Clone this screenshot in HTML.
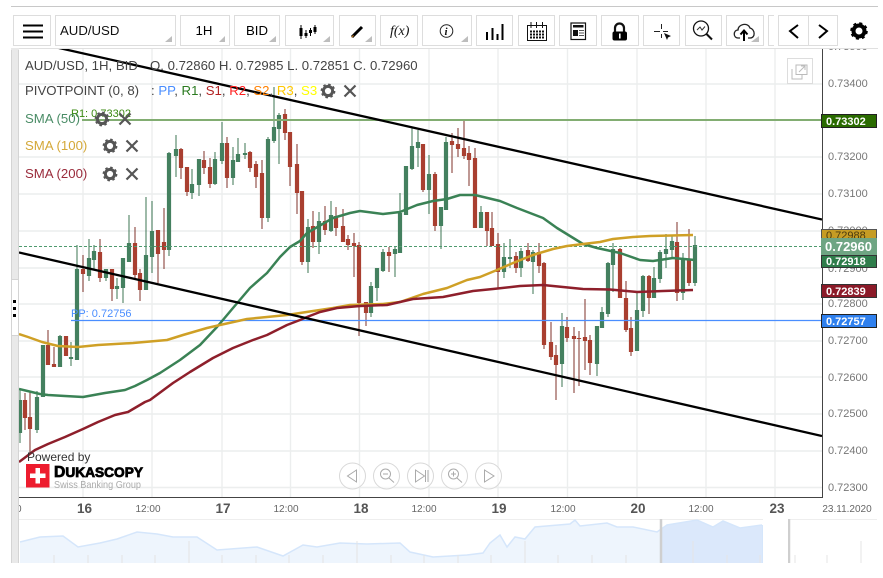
<!DOCTYPE html>
<html><head><meta charset="utf-8"><title>AUD/USD</title>
<style>
html,body{margin:0;padding:0;background:#fff;width:883px;height:578px;overflow:hidden}
svg{display:block;font-family:"Liberation Sans",sans-serif}
</style></head><body>
<svg width="883" height="578" viewBox="0 0 883 578" xmlns="http://www.w3.org/2000/svg">
<defs>
<g id="gear"><circle r="4.6" fill="none" stroke="#555" stroke-width="3"/><circle r="6.2" fill="none" stroke="#555" stroke-width="2.4" stroke-dasharray="2.43 2.43"/></g>
<g id="x"><path d="M-5.5-5.5L5.5 5.5M5.5-5.5L-5.5 5.5" stroke="#555" stroke-width="2.2" fill="none"/></g>
<clipPath id="plot"><rect x="19" y="48" width="803" height="449"/></clipPath>
<clipPath id="ax"><rect x="823" y="48" width="60" height="450"/></clipPath>
<clipPath id="dates"><rect x="19" y="498" width="864" height="20"/></clipPath>
</defs>

<!-- price grid -->
<g stroke="#eceeee" stroke-width="1.4" fill="none">
<path d="M19 84H822M19 157H822M19 194H822M19 231H822M19 268H822M19 304H822M19 341H822M19 377H822M19 414H822M19 451H822M19 487.500H822"/>
<path d="M83 48V497M152 48V497M222 48V497M290.500 48V497M359.500 48V497M429 48V497M498 48V497M567.500 48V497M637 48V497M706 48V497M775 48V497"/>
</g>

<!-- left strip -->
<rect x="11" y="48" width="8" height="515" fill="#e9e9e9"/>
<rect x="12" y="280" width="6" height="55" fill="#fff"/>
<path d="M11.500 48V563M18.500 48V563" stroke="#d4d4d4" fill="none"/>
<path d="M12 279.500H18M12 335.500H18" stroke="#d4d4d4"/>
<rect x="13" y="300" width="3" height="3" fill="#000"/><rect x="13" y="307" width="3" height="3" fill="#000"/><rect x="13" y="314" width="3" height="3" fill="#000"/>

<g clip-path="url(#plot)">
<!-- green wicks -->
<path fill="none" stroke="#356f4c" stroke-opacity=".8" stroke-width="1.200" d="M20 390V443M37 391V433M60 335V367M71 342V366M77 245V360M89 239V281M94 245V270M106 269V281M117 278V299M123 258V303M129 215V262M146 197V290M152 201V273M169 152V256M176 135V177M192 169V199M199 159V196M215 152V185M222 122V164M233 147V185M238 138V162M245 143V159M268 137V222M274 87V143M279 113V164M308 219V273M319 212V254M331 201V232M371 282V317M377 268V301M383 249V272M395 247V277M400 193V253M412 128V170M418 130V167M429 155V214M441 207V249M446 137V210M481 206V228M504 243V278M510 239V268M521 248V277M533 250V294M562 313V387M597 326V376M602 307V328M608 262V317M613 243V292M637 291V351M643 275V317M654 267V298M660 250V283M666 234V268M672 235V258M683 253V300M695 236V286"/>
<!-- red wicks -->
<path fill="none" stroke="#7a2a22" stroke-opacity=".8" stroke-width="1.200" d="M25 393V430M30 392V453M48 330V365M54 347V367M83 255V292M100 239V282M112 269V301M135 227V280M140 269V301M158 230V283M164 208V269M181 148V179M187 167V196M204 151V174M210 158V188M227 137V188M250 151V172M256 161V188M262 160V229M285 109V140M290 132V186M297 144V214M302 191V265M313 211V248M325 206V235M336 207V236M343 209V242M348 235V250M354 233V277M359 242V336M366 302V326M389 247V272M423 144V192M435 172V231M452 133V173M458 128V157M464 120V159M469 146V186M475 148V228M487 212V246M492 212V246M498 233V289M516 252V273M528 243V262M539 243V273M544 262V349M551 322V360M556 345V400M567 317V342M574 327V393M579 331V386M585 299V370M590 335V375M620 248V298M626 281V332M631 317V356M649 275V314M677 222V301M689 229V286"/>
<!-- green bodies -->
<path fill="none" stroke="#44805f" stroke-width="4.200" d="M20 400V433M37 397V430M43 345V397M60 336V367M71 357V359M77 269V360M89 258V276M94 251V260M106 269V278M117 286V289M123 258V288M129 243V262M146 255V290M152 231V257M169 153V250M176 149V156M192 184V193M199 159V185M215 159V184M222 143V161M233 160V178M238 154V162M245 153V155M268 139V218M274 127V141M279 115V129M308 227V262M319 221V242M331 215V231M371 286V313M377 268V288M383 252V271M395 249V254M400 213V253M406 166V215M412 146V169M418 142V148M429 174V190M441 207V226M446 142V210M481 212V228M504 257V272M510 257V259M521 251V268M533 252V262M562 326V364M597 326V364M602 312V328M608 263V314M613 249V265M637 310V351M643 276V311M654 278V298M660 252V279M666 249V254M672 241V250M683 260V293M695 245V283"/>
<!-- red bodies -->
<path fill="none" stroke="#a93f30" stroke-width="4.200" d="M25 400V418M30 417V429M48 345V365M54 364V367M66 336V356M83 269V274M100 252V278M112 269V289M135 243V275M140 273V290M158 230V254M164 242V250M181 149V168M187 167V192M204 160V168M210 167V184M227 143V178M250 152V168M256 164V177M262 173V218M285 114V133M290 132V167M297 164V193M302 191V262M313 226V242M325 221V230M336 216V228M343 226V242M348 239V245M354 243V246M359 245V303M366 302V313M389 252V256M423 144V190M435 174V226M452 141V145M458 144V149M464 148V156M469 153V160M475 158V228M487 212V231M492 228V246M498 244V272M516 256V268M528 250V261M539 252V266M544 263V345M551 342V357M556 355V365M567 327V338M574 336V339M579 338V339M585 337V341M590 340V363M620 249V298M626 298V330M631 328V352M649 276V298M677 242V293M689 259V283"/>

<!-- horizontal levels -->
<path d="M82 120H822" stroke="#82ad72" stroke-width="2" fill="none"/>
<path d="M71 320.500H822" stroke="#4a8eff" stroke-width="1.300" fill="none"/>
<path d="M19 246.500H822" stroke="#4f9a6f" stroke-width="1" stroke-dasharray="3 2" fill="none"/>

<!-- SMA lines -->
<polyline fill="none" stroke="#3a8255" stroke-width="2.500" stroke-linejoin="round" points="19,389 40,394 48,395 65,396 83,397 105,393 125,390 135,386 147,380 160,373 180,360 200,345 217,327 233,308 250,288 267,273 280,257 290,247 300,241 307,233 333,218 350,213 360,211 383,214 400,212 417,205 433,201 447,199 460,195 475,195 500,201 517,208 543,218 557,228 583,244 597,248 620,253 640,260 653,261 673,258 695,260"/>
<polyline fill="none" stroke="#cfa026" stroke-width="2.500" stroke-linejoin="round" points="19,334 28,337 42,342 58,346 78,347 98,345 133,343 167,340 183,335 207,328 220,325 247,319 267,317 287,315 300,313 333,308 350,305 383,304 400,302 423,294 447,288 467,280 480,277 497,270 513,263 533,255 553,249 567,246 583,244 600,242 613,239 633,237 650,236 693,235"/>
<polyline fill="none" stroke="#8e1f2b" stroke-width="2.500" stroke-linejoin="round" points="19,462 35,450 48,444 65,437 83,429 98,422 115,415 128,412 145,402 150,400 173,383 190,372 213,358 233,348 253,340 267,335 287,325 300,320 307,317 320,312 337,308 360,306 387,305 413,299 443,297 473,291 493,289 520,286 543,285 563,287 583,289 610,289.500 637,292 663,291 693,290"/>

<!-- trend lines -->
<path d="M19 39L822 219.500" stroke="#000" stroke-width="2.300" fill="none"/>
<path d="M19 252.500L822 436" stroke="#000" stroke-width="2.300" fill="none"/>

<text x="71" y="317" font-size="11" fill="#4a8eff">PP: 0.72756</text>
<text x="71" y="117" font-size="11" fill="#3a8a10">R1: 0.73302</text>
</g>

<!-- axes -->
<path d="M822.500 48V497.500H19" stroke="#444" stroke-width="1" fill="none"/>

<!-- price labels -->
<g font-size="11" fill="#777" clip-path="url(#ax)">
<text x="828" y="50">0.73500</text>
<text x="828" y="87">0.73400</text>
<text x="828" y="160">0.73200</text>
<text x="828" y="197">0.73100</text>
<text x="828" y="234">0.73000</text>
<text x="828" y="272">0.72900</text>
<text x="828" y="307">0.72800</text>
<text x="828" y="344">0.72700</text>
<text x="828" y="381">0.72600</text>
<text x="828" y="417">0.72500</text>
<text x="828" y="454">0.72400</text>
<text x="828" y="491">0.72300</text>
</g>

<!-- price tags -->
<g font-size="11" font-weight="bold" fill="#fff">
<rect x="821.500" y="114.500" width="55" height="13" fill="#2a6b00" stroke="#222"/><text x="826" y="125">0.73302</text>
<rect x="821.500" y="229.500" width="55" height="11" fill="#c69c24" stroke="#555"/><text x="826" y="239" fill="#4a3a10" font-weight="normal">0.72988</text>
<rect x="821.500" y="255.500" width="55" height="12" fill="#2f7d4b" stroke="#333"/><text x="826" y="265">0.72918</text>
<rect x="821" y="238" width="56" height="17" fill="#6fa583"/><text x="825" y="251" font-size="13">0.72960</text>
<rect x="821.500" y="284.500" width="55" height="13" fill="#8b1a28" stroke="#333"/><text x="826" y="295">0.72839</text>
<rect x="821.500" y="314.500" width="55" height="13" fill="#2f80ee" stroke="#222"/><text x="826" y="325">0.72757</text>
</g>

<!-- top cover & toolbar -->
<rect x="0" y="0" width="883" height="48" fill="#fff"/>
<path d="M11 6.500H878" stroke="#c8c8c8" stroke-width="1" fill="none"/>
<path d="M11 48.500H878" stroke="#e0e0e0" stroke-width="1" fill="none"/>
<rect x="11" y="48" width="8" height="2" fill="#e9e9e9"/>
<g fill="#fff" stroke="#ddd">
<rect x="13.500" y="15.500" width="37" height="30"/>
<rect x="55.500" y="15.500" width="120" height="30"/>
<rect x="180.500" y="15.500" width="49" height="30"/>
<rect x="234.500" y="15.500" width="45" height="30"/>
<rect x="285.500" y="15.500" width="48" height="30"/>
<rect x="339.500" y="15.500" width="36" height="30"/>
<rect x="380.500" y="15.500" width="37" height="30"/>
<rect x="422.500" y="15.500" width="49" height="30"/>
<rect x="476.500" y="15.500" width="36" height="30"/>
<rect x="518.500" y="15.500" width="36" height="30"/>
<rect x="559.500" y="15.500" width="37" height="30"/>
<rect x="601.500" y="15.500" width="37" height="30"/>
<rect x="643.500" y="15.500" width="36" height="30"/>
<rect x="685.500" y="15.500" width="36" height="30"/>
<rect x="726.500" y="15.500" width="37" height="30"/>
<path d="M774 15.500H768.500V45.500H774"/>
<rect x="778.500" y="15.500" width="59" height="30"/>
<path d="M808.500 15.500V45.500"/>
</g>
<g fill="#bdbdbd">
<polygon points="165,42 172,42 172,36"/><polygon points="219,42 225,42 225,36"/><polygon points="269,42 276,42 276,36"/><polygon points="323,42 330,42 330,36"/><polygon points="365,42 372,42 372,36"/><polygon points="461,42 468,42 468,36"/><polygon points="751,42 759,42 759,36"/>
</g>
<path d="M23 25.500H43M23 31.500H43M23 37.500H43" stroke="#000" stroke-width="2" fill="none"/>
<text x="60" y="35" font-size="13.200" fill="#111">AUD/USD</text>
<text x="195.500" y="35" font-size="13.200" fill="#000">1H</text>
<text x="246" y="35" font-size="13.200" fill="#000">BID</text>
<!-- chart type -->
<path d="M301 25V39M306 30V38M310.500 28V36M315 25V34" stroke="#000" stroke-width="1" fill="none"/>
<path d="M301 28V36M306 33V36M310.500 30V33M315 27V32" stroke="#000" stroke-width="3" fill="none"/>
<!-- pencil -->
<path d="M352 37L362 27" stroke="#000" stroke-width="3" fill="none"/><path d="M351 38L354 36L353 35Z" fill="#e08a20"/>
<text x="390" y="35" font-size="14" font-style="italic" font-family="Liberation Serif,serif" fill="#111">f(x)</text>
<!-- info -->
<circle cx="446.500" cy="31" r="6.300" fill="none" stroke="#222" stroke-width="1"/>
<text x="444.500" y="35" font-size="11" font-style="italic" font-weight="bold" font-family="Liberation Serif,serif" fill="#111">i</text>
<!-- bars -->
<path d="M487 40V32M492.500 40V28M497.500 40V34M502.500 40V24" stroke="#000" stroke-width="2" fill="none"/>
<!-- calendar -->
<rect x="527.500" y="25.500" width="19" height="15" fill="#fff" stroke="#111"/>
<path d="M531 22V28M536.500 22V28M542.500 22V28" stroke="#111" fill="none"/>
<path d="M530 31.500H544M530 34.500H544M530 37.500H544" stroke="#111" stroke-width="2" stroke-dasharray="2 1" fill="none"/>
<!-- news -->
<rect x="571" y="23" width="14.500" height="16.500" fill="#fff" stroke="#111" stroke-width="1.200"/>
<rect x="573" y="25" width="10.500" height="2.500" fill="#111"/><rect x="573" y="30" width="5" height="6" fill="#111"/>
<path d="M579 30.500H584M579 33H584M579 35.500H584" stroke="#555" fill="none"/>
<!-- lock -->
<path d="M615 33V28A4.500 4.500 0 0 1 624 28V33" fill="none" stroke="#111" stroke-width="2.200"/>
<rect x="612.500" y="31.500" width="14.500" height="9" rx="2" fill="#000"/><rect x="619" y="33.500" width="1.600" height="5" fill="#fff"/>
<!-- crosshair -->
<path d="M654 31.500H660M663 31.500H668M661.500 24V29M661.500 34V38" stroke="#222" fill="none"/>
<path d="M664 33L671 36L668 37.500L667 40Z" fill="#111"/>
<!-- zoom chart -->
<circle cx="701" cy="28.500" r="7.500" fill="none" stroke="#111" stroke-width="1.300"/>
<path d="M706.500 34L712 39.500" stroke="#111" stroke-width="2" fill="none"/>
<path d="M697 30L700 27L702 30L705 26.500" stroke="#333" fill="none"/>
<!-- cloud -->
<path d="M740 38H738C733 38 733 30 738 30C738 24 748 22 750 28C755 29 756 38 750 38H748" fill="none" stroke="#222" stroke-width="1.300"/>
<path d="M744 41V31M740.500 34.500L744 30.500L747.500 34.500" fill="none" stroke="#000" stroke-width="2"/>
<!-- arrows -->
<path d="M798 25L790 31L798 38" stroke="#000" stroke-width="2" fill="none"/>
<path d="M819 25L827 31L819 38" stroke="#000" stroke-width="2" fill="none"/>
<!-- big gear -->
<g transform="translate(859,31)"><circle r="5.500" fill="none" stroke="#000" stroke-width="4"/><circle r="7.300" fill="none" stroke="#000" stroke-width="3" stroke-dasharray="2.870 2.860"/></g>

<!-- popout -->
<rect x="787.500" y="58.500" width="25" height="25" fill="#fff" stroke="#ddd"/>
<path d="M792 69V79H802V74M796 65V74.500H807V65Z" fill="#fff" stroke="#bbb"/>
<path d="M799 72L805 66M801 66H805V70" stroke="#bbb" fill="none"/>

<!-- legends -->
<text x="25" y="70" font-size="13.200" fill="#444">AUD/USD, 1H, BID</text>
<text x="150" y="70" font-size="13.200" fill="#444">O. 0.72860 H. 0.72985 L. 0.72851 C. 0.72960</text>
<text x="25" y="95" font-size="13.200" fill="#444">PIVOTPOINT (0, 8)</text>
<text x="151" y="95" font-size="13.200" fill="#444" xml:space="preserve">: <tspan fill="#4a8eff">PP</tspan>, <tspan fill="#2a7a1f">R1</tspan>, <tspan fill="#b22222">S1</tspan>, <tspan fill="#ff2020">R2</tspan>, <tspan fill="#ff8000">S2</tspan>, <tspan fill="#ffc800">R3</tspan>, <tspan fill="#ffff00">S3</tspan></text>
<use href="#gear" x="328" y="91"/><use href="#x" x="350" y="91"/>
<text x="25" y="123" font-size="13.200" fill="#4a8c66">SMA (50)</text>
<use href="#gear" x="102" y="119"/><use href="#x" x="125" y="119"/>
<text x="25" y="150" font-size="13.200" fill="#d4a838">SMA (100)</text>
<use href="#gear" x="110" y="146"/><use href="#x" x="132" y="146"/>
<text x="25" y="178" font-size="13.200" fill="#9a2b3b">SMA (200)</text>
<use href="#gear" x="110" y="174"/><use href="#x" x="132" y="174"/>

<!-- logo -->
<text x="27" y="461" font-size="12" fill="#333">Powered by</text>
<rect x="26" y="464" width="23.500" height="23.500" fill="#ed1c2e"/>
<path d="M35.500 468H40V473.500H45.500V478H40V483.500H35.500V478H30V473.500H35.500Z" fill="#fff"/>
<text x="54" y="477" font-size="16" font-weight="bold" fill="#000" textLength="89" lengthAdjust="spacingAndGlyphs" stroke="#000" stroke-width=".8">D<tspan font-size="14">UKASCOPY</tspan></text>
<text x="54" y="488" font-size="10.500" fill="#aaa" textLength="87" lengthAdjust="spacingAndGlyphs">Swiss Banking Group</text>

<!-- nav buttons -->
<g fill="#fff" fill-opacity=".6" stroke="#d8d8d8">
<circle cx="352.500" cy="476" r="13"/><circle cx="386.500" cy="476" r="13"/><circle cx="420.500" cy="476" r="13"/><circle cx="454.500" cy="476" r="13"/><circle cx="488.500" cy="476" r="13"/>
</g>
<g fill="none" stroke="#aaa">
<path d="M356.500 470V482L347.500 476Z"/>
<circle cx="385.500" cy="474" r="5"/><path d="M389 478L394 482.500M383 474H388"/>
<path d="M415.500 470V482L424.500 476ZM425.500 470V482M428 470V482"/>
<circle cx="453.500" cy="474" r="5"/><path d="M457 478L462 482.500M451 474H456M453.500 471.500V476.500"/>
<path d="M484.500 470V482L494 476Z"/>
</g>

<!-- date axis -->
<g clip-path="url(#dates)">
<text x="9" y="512" font-size="10" fill="#666" text-anchor="middle">12:00</text>
<g font-size="13.500" font-weight="bold" fill="#555" text-anchor="middle">
<text x="84.500" y="513">16</text><text x="223" y="513">17</text><text x="361" y="513">18</text><text x="499" y="513">19</text><text x="638" y="513">20</text><text x="777" y="513">23</text>
</g>
<g font-size="10" fill="#666" text-anchor="middle">
<text x="148" y="512">12:00</text><text x="286" y="512">12:00</text><text x="424" y="512">12:00</text><text x="563" y="512">12:00</text><text x="701" y="512">12:00</text><text x="847" y="512">23.11.2020</text>
</g>
</g>

<!-- navigator -->
<path d="M19 519.500H877" stroke="#eee" fill="none"/>
<path d="M20 563V542L40 537L63 536L78 547L100 543L117 539L137 532L157 534L173 537L197 537L217 550L257 547L283 556L303 545L317 547L340 543L367 544L400 543L410 552L433 557L467 555L483 553L490 543L500 535L507 547L515 537L525 539L535 527L570 524L575 520L580 526L607 523L617 527L633 527L657 532L667 525L697 520L713 527L723 521L740 528L762 525V563Z" fill="#eef5fd"/>
<path d="M662 563V529L667 525L697 520L713 527L723 521L740 528L762 525V563Z" fill="#dbe8fb"/>
<path d="M20 542L40 537L63 536L78 547L100 543L117 539L137 532L157 534L173 537L197 537L217 550L257 547L283 556L303 545L317 547L340 543L367 544L400 543L410 552L433 557L467 555L483 553L490 543L500 535L507 547L515 537L525 539L535 527L570 524L575 520L580 526L607 523L617 527L633 527L657 532L667 525L697 520L713 527L723 521L740 528L762 525" fill="none" stroke="#d5e6fb" stroke-width="1.500"/>
<path d="M54 555V563M88 555V563M122 555V563M155 555V563M189 541V563M222 555V563M256 555V563M289 555V563M323 555V563M357 541V563M391 555V563M424 555V563M458 555V563M491 555V563M525 541V563M558 555V563M592 555V563M626 555V563M693 541V563M727 555V563M760 555V563M795 555V563M827 555V563M861 541V563" stroke="#e4e4e4" stroke-width="1" fill="none"/>
<path d="M661 519V563M789 519V563" stroke="#cfcfcf" stroke-width="2.500" fill="none"/>
<rect x="763" y="519" width="25" height="44" fill="#fff"/>
<path d="M762.500 525V563" stroke="#d5e6fb" fill="none"/>
<rect x="0" y="563" width="883" height="15" fill="#fff"/>
</svg>
</body></html>
